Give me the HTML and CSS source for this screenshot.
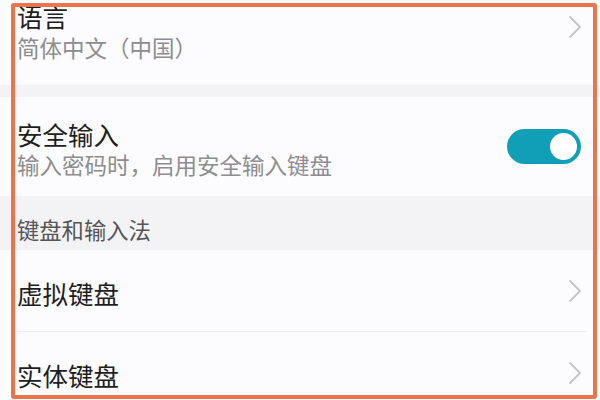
FILE: index.html
```html
<!DOCTYPE html>
<html lang="zh-CN">
<head>
<meta charset="utf-8">
<link rel="stylesheet" href="styles.css">
</head>
<body>
<div class="screen">
  <div class="row row-lang">
    <div class="texts">
      <div class="title">语言</div>
      <div class="sub">简体中文（中国）</div>
    </div>
    <svg class="chev" viewBox="0 0 14 24" width="14" height="24"><path d="M2 2 L12 12 L2 22" fill="none" stroke="#c4c3c6" stroke-width="1.8" stroke-linecap="round" stroke-linejoin="round"/></svg>
  </div>
  <div class="gap"></div>
  <div class="row row-secure">
    <div class="texts">
      <div class="title">安全输入</div>
      <div class="sub">输入密码时，启用安全输入键盘</div>
    </div>
    <div class="toggle"><div class="knob"></div></div>
  </div>
  <div class="header">键盘和输入法</div>
  <div class="row row-plain">
    <div class="title">虚拟键盘</div>
    <svg class="chev" viewBox="0 0 14 24" width="14" height="24"><path d="M2 2 L12 12 L2 22" fill="none" stroke="#c4c3c6" stroke-width="1.8" stroke-linecap="round" stroke-linejoin="round"/></svg>
  </div>
  <div class="divider"></div>
  <div class="row row-plain">
    <div class="title">实体键盘</div>
    <svg class="chev" viewBox="0 0 14 24" width="14" height="24"><path d="M2 2 L12 12 L2 22" fill="none" stroke="#c4c3c6" stroke-width="1.8" stroke-linecap="round" stroke-linejoin="round"/></svg>
  </div>
  <div class="frame"></div>
</div>
</body>
</html>
```
FILE: styles.css
```css
html, body {
  margin: 0;
  padding: 0;
  background: #fcfbfd;
}
.screen {
  position: relative;
  width: 600px;
  height: 400px;
  overflow: hidden;
  font-family: "Noto Sans CJK SC", "Noto Sans", sans-serif;
  background: #fcfbfd;
}
.row {
  display: flex;
  align-items: center;
  justify-content: space-between;
  padding: 0 18px 0 17px;
  background: #fcfbfd;
}
.texts {
  display: flex;
  flex-direction: column;
}
.title {
  font-size: 25.5px;
  line-height: 31px;
  color: #1e1e1e;
}
.sub {
  font-size: 22.5px;
  line-height: 31px;
  color: #8d8c8f;
}
.row-lang {
  height: 85px;
  box-sizing: border-box;
  padding-top: 2px;
  align-items: flex-start;
}
.row-lang .title {
  line-height: 28px;
}
.row-lang .sub {
  margin-top: 2px;
  line-height: 30px;
}
.row-lang .chev {
  margin-top: 13px;
}
.gap {
  height: 12px;
  background: #f3f2f4;
}
.row-secure {
  height: 99px;
}
.row-secure .texts {
  padding-top: 5px;
}
.toggle {
  width: 74px;
  height: 35px;
  border-radius: 18px;
  background: #109fb7;
  display: flex;
  align-items: center;
  justify-content: flex-end;
  padding-right: 4px;
  box-sizing: border-box;
  margin-right: 1px;
}
.knob {
  width: 27px;
  height: 27px;
  border-radius: 50%;
  background: #ffffff;
}
.header {
  height: 54px;
  box-sizing: border-box;
  padding: 18px 17px 0;
  font-size: 22.3px;
  line-height: 30px;
  color: #555457;
  background: #f3f2f4;
}
.row-plain {
  height: 81px;
  padding-top: 4px;
  box-sizing: border-box;
}
.row-plain .chev {
  margin-top: -4px;
}
.divider {
  height: 1px;
  margin: 0 14px 0 17px;
  background: #ebeaed;
}
.chev {
  display: block;
  flex: none;
}
.frame {
  position: absolute;
  left: 11px;
  top: 3px;
  width: 586px;
  height: 396px;
  box-sizing: border-box;
  border: 4px solid #ea744b;
  border-radius: 3px;
  pointer-events: none;
}
```
